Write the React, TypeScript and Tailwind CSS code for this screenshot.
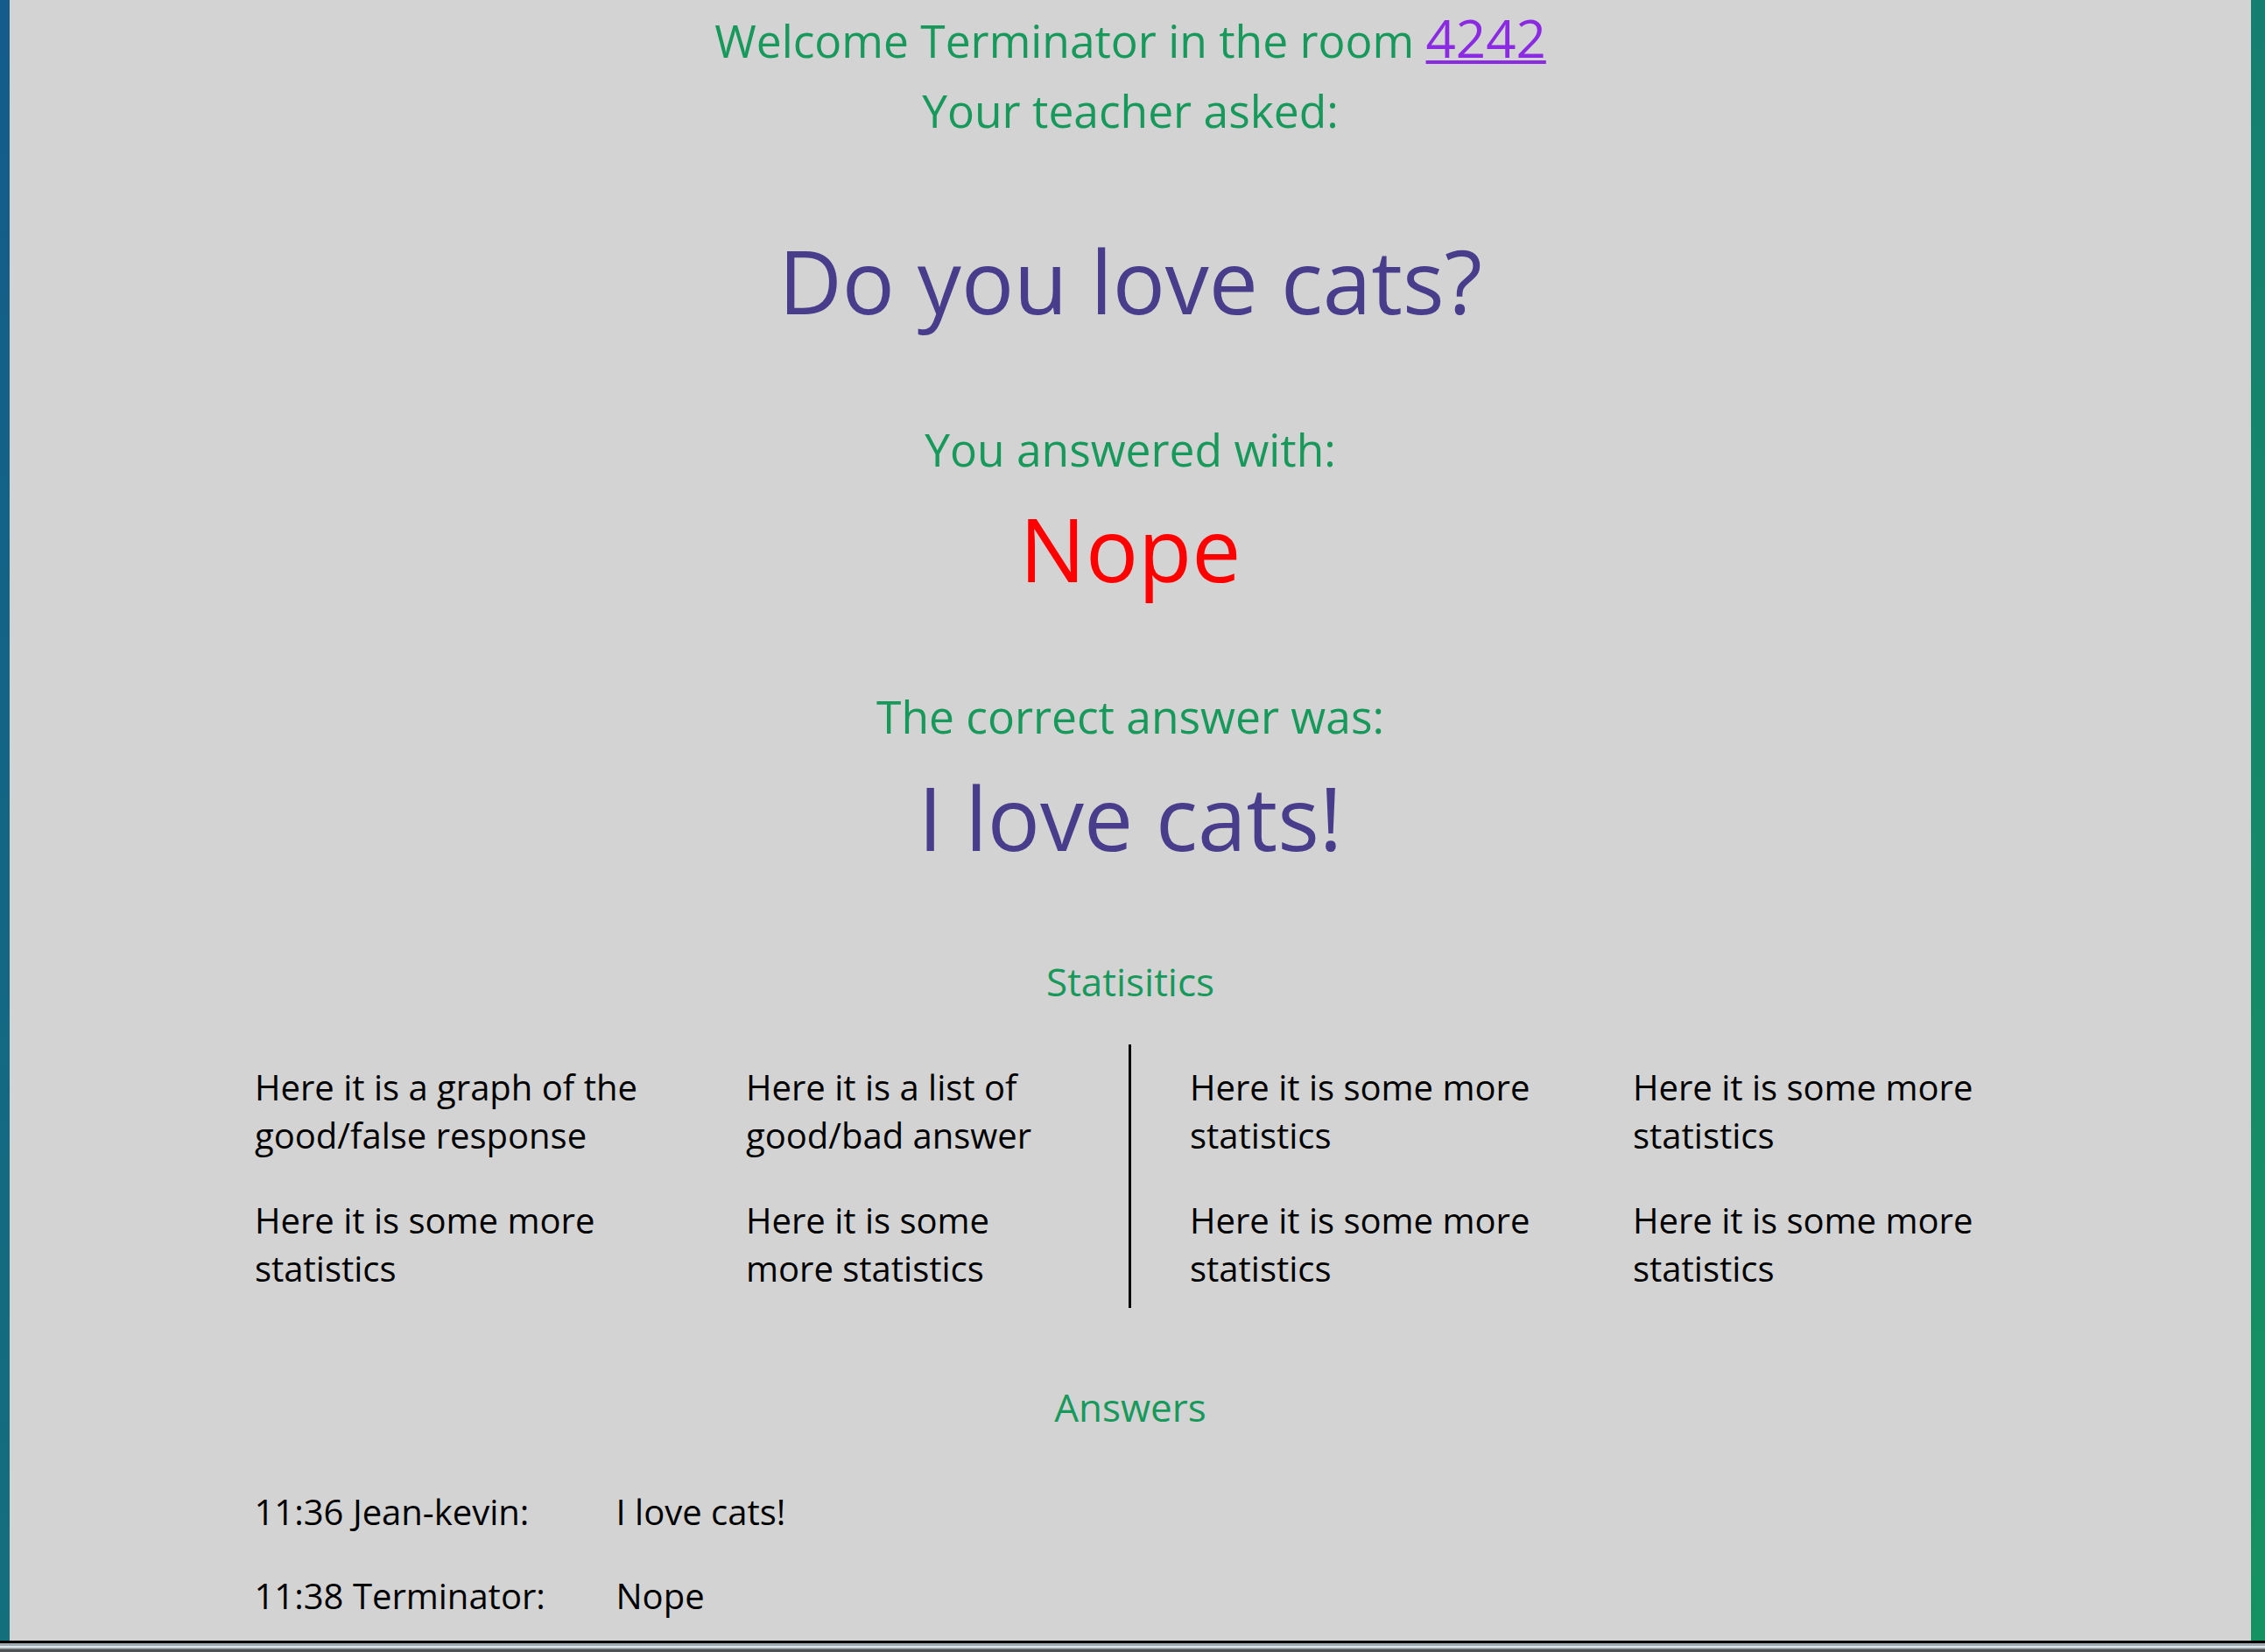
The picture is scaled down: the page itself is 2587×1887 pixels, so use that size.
const stats = [
  ["Here it is a graph of the good/false response", "Here it is a list of good/bad answer"],
  ["Here it is some more statistics", "Here it is some more statistics"],
];

const moreStats = [
  ["Here it is some more statistics", "Here it is some more statistics"],
  ["Here it is some more statistics", "Here it is some more statistics"],
];

const answers = [
  { time: "11:36", name: "Jean-kevin", text: "I love cats!" },
  { time: "11:38", name: "Terminator", text: "Nope" },
];

export default function App() {
  return (
    <div className="flex h-[1887px] w-full flex-col font-['Open_Sans',sans-serif]">
      <div className="flex min-h-0 flex-1 bg-[linear-gradient(127deg,#135c8c,#159261)] pl-[11px] pr-[16px]">
        <main className="flex flex-1 flex-col items-center bg-[#d3d3d3] text-center">
          <p className="pt-[3px] text-[51.5px] leading-[80px] text-[#16995a]">
            Welcome Terminator in the room{" "}
            <a href="#" className="text-[60px] text-[#8a2be2] underline decoration-[4px] underline-offset-[3px]">
              4242
            </a>
            <br />
            Your teacher asked:
          </p>
          <h1 className="mt-[86px] text-[100px] leading-[136px] text-[#483d8b]">Do you love cats?</h1>

          <h2 className="mt-[91px] text-[51.5px] leading-[68px] text-[#16995a]">You answered with:</h2>
          <p className="mt-[11px] text-[100px] leading-[136px] text-[#ff0000]">Nope</p>

          <h2 className="mt-[90px] text-[51.5px] leading-[68px] text-[#16995a]">The correct answer was:</h2>
          <p className="mt-[13px] text-[100px] leading-[136px] text-[#483d8b]">I love cats!</p>

          <h3 className="mt-[90px] text-[44px] leading-[60px] text-[#16995a]">Statisitics</h3>
          <div className="mt-[42px] flex text-left text-[40px] leading-[55px] text-black">
            <div className="grid grid-cols-[460px_340px] gap-x-[101px] gap-y-[42px] border-r-[3px] border-black pb-[18px] pr-[97px] pt-[21px]">
              {stats.flat().map((s, i) => (
                <p key={i}>{s}</p>
              ))}
            </div>
            <div className="grid grid-cols-[440px_426px] gap-x-[66px] gap-y-[42px] pb-[18px] pl-[67px] pt-[21px]">
              {moreStats.flat().map((s, i) => (
                <p key={i}>{s}</p>
              ))}
            </div>
          </div>

          <h3 className="mt-[83px] text-[44px] leading-[60px] text-[#16995a]">Answers</h3>
          <ul className="mt-[62px] flex w-[2001px] flex-col gap-[41px] text-left text-[40px] leading-[55px] text-black">
            {answers.map((a) => (
              <li key={a.time} className="grid grid-cols-[413px_auto]">
                <span>
                  {a.time} {a.name}:
                </span>
                <span>{a.text}</span>
              </li>
            ))}
          </ul>
        </main>
      </div>
      <div className="h-[3px] bg-black" />
      <div className="h-[3px] bg-[#9ea9b0]" />
      <div className="h-[2px] bg-[#dde4e8]" />
      <div className="h-[1px] bg-[#aab3b8]" />
      <div className="h-[1px] bg-[#858c90]" />
      <div className="h-[3px] bg-[#4e5254]" />
    </div>
  );
}
